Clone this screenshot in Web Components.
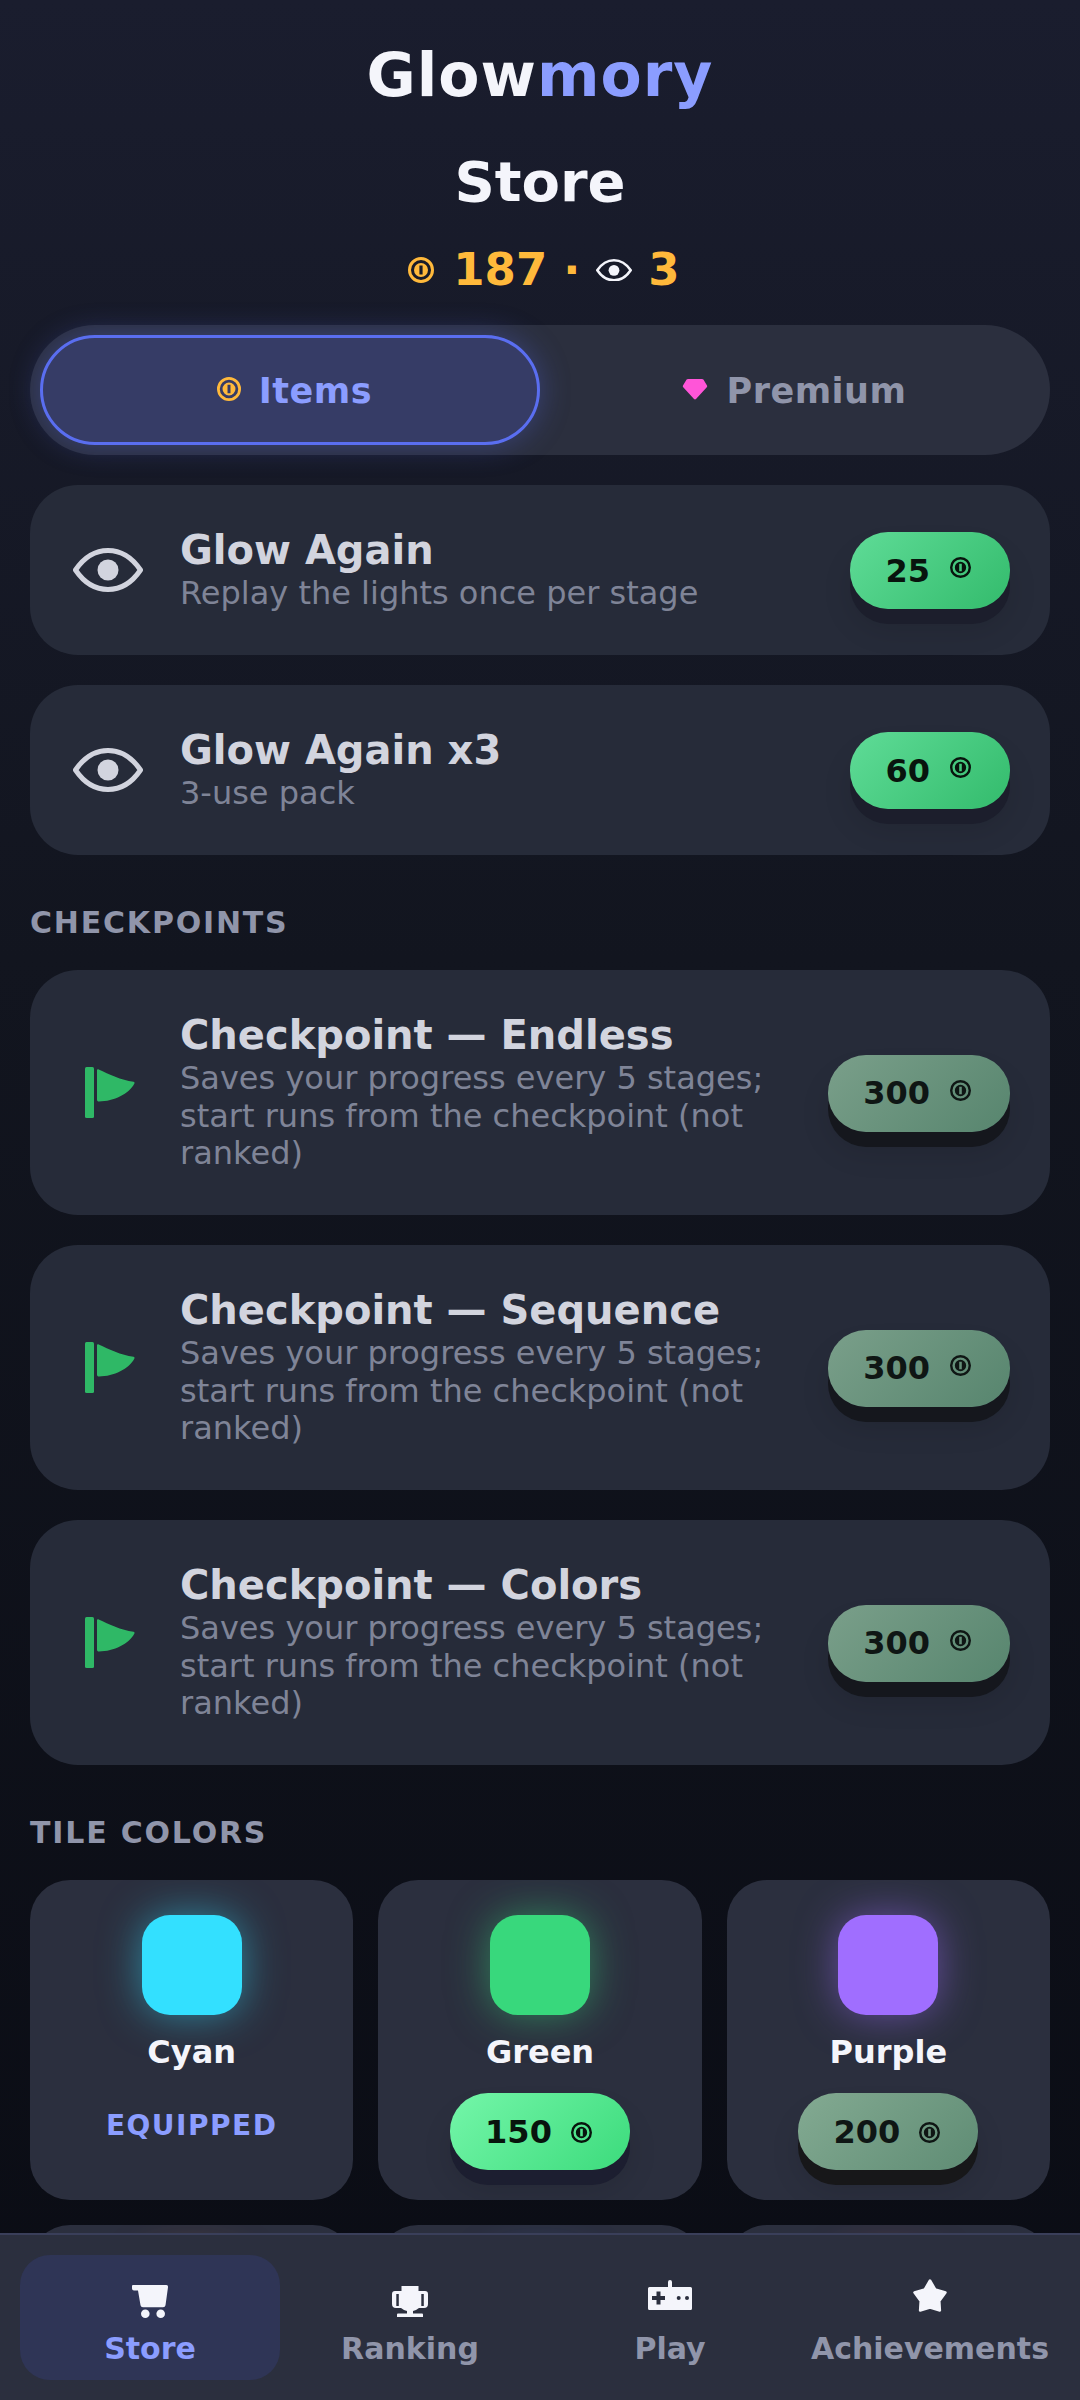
<!DOCTYPE html>
<html>
<head>
<meta charset="utf-8">
<title>Glowmory Store</title>
<style>
	html, body { margin: 0; padding: 0; height: 100%; background: #0a0c14; }
	body { font-family: 'DejaVu Sans', sans-serif; color: #f4f5fb; overflow: hidden; }
</style>
</head>
<body>
<gm-app>
	<gm-header></gm-header>
	<gm-tabs></gm-tabs>
	<gm-item icon="eye" name="Glow Again" desc="Replay the lights once per stage" price="25"></gm-item>
	<gm-item icon="eye" name="Glow Again x3" desc="3-use pack" price="60"></gm-item>
	<gm-label>CHECKPOINTS</gm-label>
	<gm-item icon="flag" name="Checkpoint — Endless" desc="Saves your progress every 5 stages; start runs from the checkpoint (not ranked)" price="300" dim></gm-item>
	<gm-item icon="flag" name="Checkpoint — Sequence" desc="Saves your progress every 5 stages; start runs from the checkpoint (not ranked)" price="300" dim></gm-item>
	<gm-item icon="flag" name="Checkpoint — Colors" desc="Saves your progress every 5 stages; start runs from the checkpoint (not ranked)" price="300" dim></gm-item>
	<gm-label>TILE COLORS</gm-label>
	<gm-tiles>
		<gm-tile name="Cyan" color="#33e0ff" equipped></gm-tile>
		<gm-tile name="Green" color="#38d87c" price="150"></gm-tile>
		<gm-tile name="Purple" color="#a06eff" price="200" dim></gm-tile>
		<gm-tile color="#ff7a3c"></gm-tile>
		<gm-tile color="#4a7dff"></gm-tile>
		<gm-tile color="#ff5a6a"></gm-tile>
	</gm-tiles>
</gm-app>
<gm-nav></gm-nav>

<script>
const COIN = `<svg viewBox="0 0 26 26" fill="currentColor"><circle cx="13" cy="13" r="11.5" fill="none" stroke="currentColor" stroke-width="3"/><path fill-rule="evenodd" d="M13 6a7 7 0 1 1 0 14 7 7 0 0 1 0-14zM11.400 8.400v9.200h3.200V8.400z"/></svg>`;
const EYE = `<svg viewBox="0 0 70 44" fill="none" stroke="currentColor"><path d="M2.500 22C12 8 23 2.500 35 2.500S58 8 67.500 22C58 36 47 41.500 35 41.500S12 36 2.500 22z" stroke-width="5" stroke-linejoin="round"/><circle cx="35" cy="22" r="10.500" fill="currentColor" stroke="none"/></svg>`;
const FLAG = `<svg viewBox="0 0 50 51" fill="currentColor"><rect x="0" y="0" width="9" height="51" rx="1.5"/><path d="M12 3.500c0-1 .8-1.500 1.700-1.100C24 7 36 13 48.500 14.800c1 .2 1.300 1 .9 1.800C44 27 29 34.500 14 34.500c-1.200 0-2-.7-2-1.800z"/></svg>`;
const GEM = `<svg viewBox="0 0 26 22" fill="currentColor"><path d="M6 1h14c.6 0 1 .2 1.400.6l3.600 6c.3.5.3 1 0 1.400L14 21c-.6.600-1.400.600-2 0L1 9c-.3-.4-.3-.9 0-1.400l3.600-6C5 1.200 5.400 1 6 1z"/></svg>`;
const CART = `<svg width="36" height="33" viewBox="0 0 36 33" fill="currentColor"><path d="M1 0h33a2 2 0 0 1 2 2.200l-2.500 18a2.500 2.500 0 0 1-2.500 2.100H11a2.500 2.500 0 0 1-2.500-2L6 5.500H2a2 2 0 0 1-2-2V1a1 1 0 0 1 1-1z"/><circle cx="13.300" cy="28.700" r="4.300"/><circle cx="28.700" cy="28.700" r="4.300"/></svg>`;
const CUP = `<svg width="36" height="31" viewBox="0 0 36 31" fill="currentColor" fill-rule="evenodd"><path d="M9.500 0h17v5H33a3 3 0 0 1 3 3v10a4 4 0 0 1-4 4h-5q-3 2.500-6 3v2.500h9a1 1 0 0 1 1 1V31H5v-2.500a1 1 0 0 1 1-1h9V25q-3-.5-6-3H4a4 4 0 0 1-4-4V8a3 3 0 0 1 3-3h6.500zM4.300 8v12h2.500V8zM29.300 8v12h2.500V8z"/></svg>`;
const PAD = `<svg width="44" height="30" viewBox="0 0 44 30" fill="currentColor" fill-rule="evenodd"><path d="M20 2a2 2 0 0 1 4 0v5h18.500A1.500 1.500 0 0 1 44 8.500v20a1.500 1.500 0 0 1-1.500 1.500h-41A1.500 1.500 0 0 1 0 28.500v-20A1.500 1.500 0 0 1 1.500 7H20zM8.500 11.500V16H4v4h4.500v4.500h4V20H17v-4h-4.500v-4.500z"/><circle cx="30.700" cy="18" r="2" fill="#2b2f3e"/><circle cx="39" cy="18" r="2" fill="#2b2f3e"/></svg>`;
const STAR = `<svg width="34" height="33" viewBox="0 0 34 33" fill="currentColor"><path d="M17 1.500l5.200 9 10.300 3-6.200 8.500.6 9.500L17 28.500 7.100 31.500l.6-9.500L1.500 13.500l10.300-3z" stroke="currentColor" stroke-width="2.500" stroke-linejoin="round"/></svg>`;

class GmApp extends HTMLElement {
	constructor() {
		super();
		this.attachShadow({ mode: 'open' }).innerHTML = `
			<style>
				:host {
					display: flex;
					flex-direction: column;
					gap: 30px;
					box-sizing: border-box;
					height: 2400px;
					overflow: hidden;
					padding: 40px 30px 0;
					background: linear-gradient(180deg, #1a1d2e 0%, #12151f 40%, #0a0c14 100%);
				}
				::slotted(*) { flex: none; }
			</style>
			<slot></slot>`;
	}
}

class GmHeader extends HTMLElement {
	constructor() {
		super();
		this.attachShadow({ mode: 'open' }).innerHTML = `
			<style>
				:host { display: block; text-align: center; font-weight: 700; }
				.logo { font-size: 60px; line-height: 70px; letter-spacing: 1px; color: #f4f5fb; }
				.logo span { color: #8b9dff; }
				h1 { margin: 39px 0 0; font-size: 56px; line-height: 66px; color: #f4f5fb; }
				.stats { display: flex; justify-content: center; align-items: center; gap: 16px; margin-top: 28px; padding-left: 8px; height: 52px; font-size: 45px; color: #ffb93b; }
				.stats svg { display: block; }
				.coin { width: 26px; height: 26px; margin-right: 3px; margin-top: 2px; }
				.eye { width: 36px; height: 23px; color: #f4f5fb; margin-top: 2px; }
			</style>
			<div class="logo">Glow<span>mory</span></div>
			<h1>Store</h1>
			<div class="stats"><span class="coin">${COIN}</span><span>187</span><span>·</span><span class="eye">${EYE}</span><span>3</span></div>`;
	}
}

class GmTabs extends HTMLElement {
	constructor() {
		super();
		this.attachShadow({ mode: 'open' }).innerHTML = `
			<style>
				:host { display: grid; grid-template-columns: 1fr 1fr; box-sizing: border-box; height: 130px; padding: 10px; border-radius: 65px; background: #2b2f3e; }
				.tab { display: flex; align-items: center; justify-content: center; gap: 18px; padding: 2px 0 0 9px; border-radius: 55px; font-size: 35px; font-weight: 700; color: #9095aa; letter-spacing: .5px; border: 3px solid transparent; }
				.tab.on { color: #8b9dff; background: #363c66; border-color: #5a6ef0; box-shadow: 0 0 30px rgba(90,110,240,.35); }
				.coin { width: 24px; height: 24px; color: #ffb93b; margin-top: -4px; }
				.gem { width: 26px; height: 22px; color: #ff55d8; margin-top: -4px; }
				svg { display: block; }
			</style>
			<div class="tab on"><span class="coin">${COIN}</span>Items</div>
			<div class="tab"><span class="gem">${GEM}</span>Premium</div>`;
	}
}

class GmPrice extends HTMLElement {
	constructor() {
		super();
		this.attachShadow({ mode: 'open' });
	}
	connectedCallback() {
		const kind = this.getAttribute('kind') || 'buy';
		this.shadowRoot.innerHTML = `
			<style>
				:host { display: inline-flex; align-items: center; justify-content: center; gap: 20px; box-sizing: border-box; height: 77px; padding: 0 39px 0 35px; border-radius: 38px; font-size: 32px; font-weight: 700; color: #08140d; }
				:host([kind=buy]) { margin-top: 1px; background: linear-gradient(135deg, #5fdc97, #33bb6c); box-shadow: 0 15px 0 #1c1e2c, 0 20px 30px rgba(0,0,0,.12); }
				:host([kind=dim]) { margin-top: 1px; color: #0f1614; background: linear-gradient(135deg, #7a9f8a, #57856e); box-shadow: 0 15px 0 #15171d, 0 20px 30px rgba(0,0,0,.12); }
				:host([kind=bright]) { gap: 19px; padding: 0 38px 0 35px; background: linear-gradient(135deg, #74f6a9, #3cdb7c); box-shadow: 0 15px 0 #1c1e30, 0 20px 30px rgba(0,0,0,.12); }
				:host([kind=dim2]) { gap: 19px; padding: 0 38px 0 35px; color: #0f1614; background: linear-gradient(135deg, #83aa92, #5f8c74); box-shadow: 0 15px 0 #171719, 0 20px 30px rgba(0,0,0,.12); }
				.coin { width: 21px; height: 21px; margin-top: ${kind === 'buy' || kind === 'dim' ? '-6px' : '2px'}; }
				svg { display: block; }
			</style>
			<span>${this.getAttribute('value')}</span><span class="coin">${COIN}</span>`;
	}
}

class GmItem extends HTMLElement {
	constructor() {
		super();
		this.attachShadow({ mode: 'open' });
	}
	connectedCallback() {
		const flag = this.getAttribute('icon') === 'flag';
		this.shadowRoot.innerHTML = `
			<style>
				:host { display: flex; align-items: center; box-sizing: border-box; padding: 39.500px 40px; border-radius: 48px; background: #262b39; }
				.icon { flex: none; width: 75px; margin-right: 35px; display: flex; justify-content: center; color: #d2d4de; }
				.icon.flag { color: #2fb866; }
				.eye { width: 70px; height: 44px; }
				.flagsvg { width: 50px; height: 51px; margin-left: 5px; }
				svg { display: block; }
				.text { flex: 1; min-width: 0; padding: 0 40px 3px 0; }
				.name { font-size: 40px; font-weight: 700; line-height: 50.500px; color: #d2d4de; }
				.desc { font-size: 32px; line-height: 37.500px; color: #7f8497; }
			</style>
			<div class="icon ${flag ? 'flag' : ''}">${flag ? `<span class="flagsvg">${FLAG}</span>` : `<span class="eye">${EYE}</span>`}</div>
			<div class="text"><div class="name">${this.getAttribute('name')}</div><div class="desc">${this.getAttribute('desc')}</div></div>
			<gm-price value="${this.getAttribute('price')}" kind="${this.hasAttribute('dim') ? 'dim' : 'buy'}"></gm-price>`;
	}
}

class GmLabel extends HTMLElement {
	constructor() {
		super();
		this.attachShadow({ mode: 'open' }).innerHTML = `
			<style>
				:host { display: block; margin-top: 20px; font-size: 30px; font-weight: 700; line-height: 35px; letter-spacing: 1.800px; color: #9095aa; }
			</style>
			<slot></slot>`;
	}
}

class GmTiles extends HTMLElement {
	constructor() {
		super();
		this.attachShadow({ mode: 'open' }).innerHTML = `
			<style>
				:host { display: grid; grid-template-columns: repeat(3, 1fr); gap: 25px; }
			</style>
			<slot></slot>`;
	}
}

class GmTile extends HTMLElement {
	constructor() {
		super();
		this.attachShadow({ mode: 'open' });
	}
	connectedCallback() {
		const c = this.getAttribute('color');
		const name = this.getAttribute('name');
		const price = this.getAttribute('price');
		const kind = this.hasAttribute('dim') ? 'dim2' : 'bright';
		let foot = '';
		if (this.hasAttribute('equipped')) foot = '<span class="eq">EQUIPPED</span>';
		else if (price) foot = `<gm-price value="${price}" kind="${kind}"></gm-price>`;
		this.shadowRoot.innerHTML = `
			<style>
				:host { display: flex; flex-direction: column; align-items: center; box-sizing: border-box; height: 320px; padding-top: 35px; border-radius: 40px; background: #2b2f3e; overflow: hidden; }
				.swatch { flex: none; width: 100px; height: 100px; border-radius: 28px; background: ${c}; box-shadow: 0 0 40px ${c}80; }
				.name { margin-top: 18px; font-size: 32px; font-weight: 700; line-height: 38px; color: #f4f5fb; }
				.slot { margin-top: 22px; height: 77px; display: flex; align-items: center; justify-content: center; }
				.eq { font-size: 28px; font-weight: 700; letter-spacing: 1.500px; color: #8b9dff; margin-bottom: 13px; }
			</style>
			<div class="swatch"></div>
			${name ? `<div class="name">${name}</div>` : ''}
			<div class="slot">${foot}</div>`;
	}
}

class GmNav extends HTMLElement {
	constructor() {
		super();
		this.attachShadow({ mode: 'open' }).innerHTML = `
			<style>
				:host { position: fixed; left: 0; right: 0; bottom: 0; display: grid; grid-template-columns: repeat(4, 260px); box-sizing: border-box; height: 167px; padding: 20px; background: #2b2f3e; border-top: 2px solid #3a3f5a; }
				.it { display: flex; flex-direction: column; align-items: center; justify-content: center; gap: 12px; box-sizing: border-box; padding-top: 14px; border-radius: 30px; font-size: 30px; font-weight: 700; color: #9095aa; }
				.it.on { background: #2f3556; color: #8b9dff; }
				.ic { height: 36px; width: 46px; color: #f4f5fb; display: flex; justify-content: center; align-items: center; }
				.ic.up { margin-top: -6px; padding-bottom: 6px; }
				.ic svg { display: block; }
			</style>
			<div class="it on"><span class="ic">${CART}</span>Store</div>
			<div class="it"><span class="ic">${CUP}</span>Ranking</div>
			<div class="it"><span class="ic up">${PAD}</span>Play</div>
			<div class="it"><span class="ic up">${STAR}</span>Achievements</div>`;
	}
}

customElements.define('gm-app', GmApp);
customElements.define('gm-header', GmHeader);
customElements.define('gm-tabs', GmTabs);
customElements.define('gm-price', GmPrice);
customElements.define('gm-item', GmItem);
customElements.define('gm-label', GmLabel);
customElements.define('gm-tiles', GmTiles);
customElements.define('gm-tile', GmTile);
customElements.define('gm-nav', GmNav);
</script>
</body>
</html>
